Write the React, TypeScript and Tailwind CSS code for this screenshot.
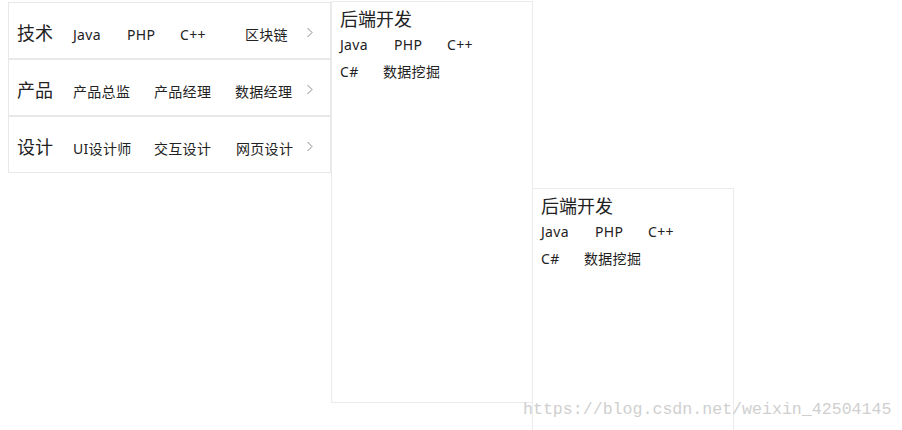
import React from "react";

const font = { fontFamily: '"Noto Sans", "Noto Sans CJK SC", sans-serif' };

const rows = [
  { title: "技术", items: ["Java", "PHP", "C++", "区块链"], widths: ["w-[54px]", "w-[53px]", "w-[65px]", ""] },
  { title: "产品", items: ["产品总监", "产品经理", "数据经理"], widths: ["w-[81px]", "w-[81px]", ""] },
  { title: "设计", items: ["UI设计师", "交互设计", "网页设计"], widths: ["w-[81px]", "w-[82px]", ""] },
];

function Chevron() {
  return (
    <svg width="8" height="11" viewBox="0 0 8 11" className="absolute right-[16px] top-[24px]">
      <polyline points="1.5,1 6,5.5 1.5,10" fill="none" stroke="#8a8a8a" strokeWidth="1" />
    </svg>
  );
}

function MenuRow({ title, items, widths }: { title: string; items: string[]; widths: string[] }) {
  return (
    <div className="relative flex h-[57px] items-center border border-[#e8e8e8] pl-[8px] pt-[6px]">
      <span className="w-[56px] text-[18px] text-[#222]">{title}</span>
      <div className="flex items-center pt-[1px] text-[14px] tracking-[0.3px] text-[#222]">
        {items.map((it, i) => (
          <span key={it} className={widths[i]}>
            {it}
          </span>
        ))}
      </div>
      <Chevron />
    </div>
  );
}

function SubPanel({ className }: { className: string }) {
  return (
    <div className={"w-[202px] border border-[#ebebeb] px-[8px] pt-[4px] text-[#222] " + className}>
      <div className="text-[18px] leading-[26px]">后端开发</div>
      <div className="flex text-[14px] leading-[26px] tracking-[0.3px]">
        <span className="w-[54px]">Java</span>
        <span className="w-[53px]">PHP</span>
        <span>C++</span>
      </div>
      <div className="flex text-[14px] leading-[28px] tracking-[0.3px]">
        <span className="w-[43px]">C#</span>
        <span>数据挖掘</span>
      </div>
    </div>
  );
}

export default function App() {
  return (
    <div className="relative h-[430px] w-[902px] overflow-hidden bg-white" style={font}>
      <div className="flex items-start">
        <div className="ml-[8px] mt-[2px] w-[323px]">
          {rows.map((r) => (
            <MenuRow key={r.title} title={r.title} items={r.items} widths={r.widths} />
          ))}
        </div>
        <SubPanel className="mt-[1px] h-[402px]" />
        <SubPanel className="-ml-[1px] mt-[188px] h-[260px]" />
      </div>
      <div
        className="absolute left-[523px] top-[398px] text-[16.6px] leading-[24px] text-[#cfcfcf]"
        style={{ fontFamily: '"Liberation Mono", monospace' }}
      >
        https://blog.csdn.net/weixin_42504145
      </div>
    </div>
  );
}
